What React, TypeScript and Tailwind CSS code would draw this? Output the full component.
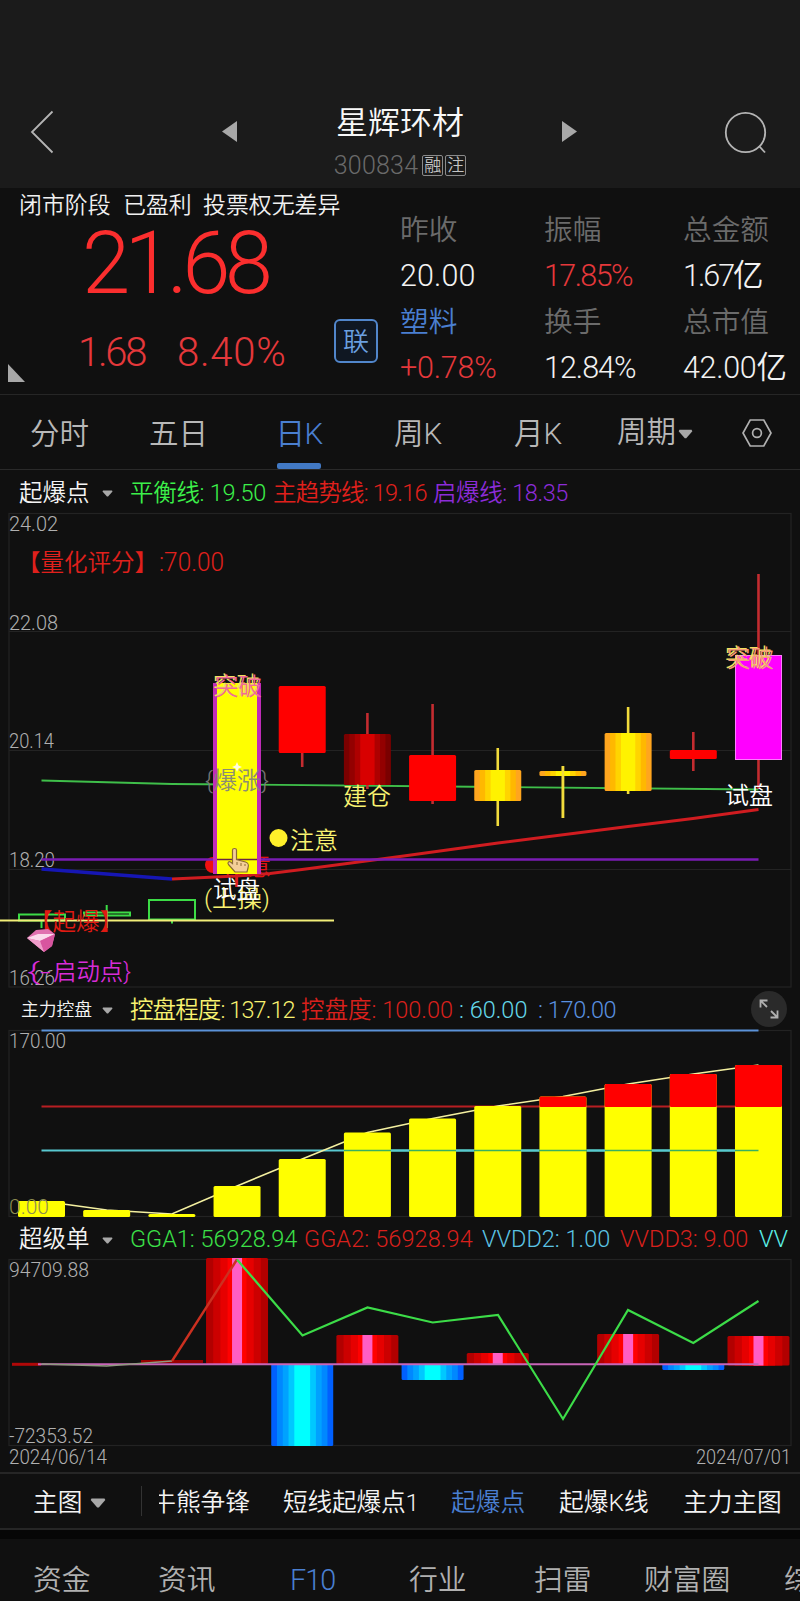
import React from "react";

type LegendItem = {
  text: string;
  className: string;
};

type Candle = {
  top: number;
  bottom: number;
  high: number;
  low: number;
  kind: "red" | "dark" | "gold" | "magenta";
};

type Label = {
  x: number;
  y: number;
  text: string;
  fill: string;
  length: number;
  size?: number;
  opacity?: number;
};

const STEP = 65.18;
const cx = (i: number) => 41.5 + STEP * i;

const stats = [
  { label: "昨收", value: "20.00", labelClass: "text-[#6b6b6b]", valueClass: "text-[#f2f2f2] tracking-[0.1px]" },
  { label: "振幅", value: "17.85%", labelClass: "text-[#6b6b6b]", valueClass: "text-[#e5383b] tracking-[-1.6px]" },
  { label: "总金额", value: "1.67亿", labelClass: "text-[#6b6b6b]", valueClass: "text-[#f2f2f2] tracking-[-2px]" },
  { label: "塑料", value: "+0.78%", labelClass: "text-[#4a7fd0]", valueClass: "text-[#e5383b] tracking-[-0.2px]" },
  { label: "换手", value: "12.84%", labelClass: "text-[#6b6b6b]", valueClass: "text-[#f2f2f2] tracking-[-1px]" },
  { label: "总市值", value: "42.00亿", labelClass: "text-[#6b6b6b]", valueClass: "text-[#f2f2f2] tracking-[-0.3px]" },
];

const candles: (Candle | null)[] = [
  null,
  null,
  null,
  null,
  { top: 686, bottom: 753, high: 686, low: 767, kind: "red" },
  { top: 734, bottom: 785, high: 713, low: 789, kind: "dark" },
  { top: 755, bottom: 801, high: 704, low: 804, kind: "red" },
  { top: 770, bottom: 801, high: 748, low: 826, kind: "gold" },
  { top: 771, bottom: 776, high: 766, low: 818, kind: "gold" },
  { top: 733, bottom: 791, high: 707, low: 794, kind: "gold" },
  { top: 750, bottom: 759, high: 732, low: 771, kind: "red" },
  { top: 655, bottom: 760, high: 574, low: 789, kind: "magenta" },
];

const controlTops = [1201, 1210, 1214, 1186, 1159, 1132.5, 1118.5, 1106, 1096.5, 1084, 1074, 1065];

const flow = [
  { i: 3, top: 1258, bottom: 1364, up: true },
  { i: 4, top: 1364, bottom: 1446, up: false },
  { i: 5, top: 1335, bottom: 1364, up: true },
  { i: 6, top: 1364, bottom: 1380, up: false },
  { i: 7, top: 1353, bottom: 1364, up: true },
  { i: 9, top: 1334, bottom: 1364, up: true },
  { i: 10, top: 1364, bottom: 1370, up: false },
  { i: 11, top: 1336, bottom: 1365.5, up: true },
];

const bands: Record<string, string[]> = {
  red: ["#ff0000"],
  magenta: ["#ff00ff"],
  dark: ["#7a0000", "#930000", "#ad0000", "#d80000"],
  gold: ["#ffa51e", "#ffb800", "#ffd400", "#fff200"],
  up: ["#b20000", "#cc0000", "#e60000", "#ff0000"],
  down: ["#0060ff", "#0088ff", "#00a2ff", "#00c8ff", "#00ffff"],
};

const Bands = ({
  x,
  y,
  w,
  h,
  kind,
}: {
  x: number;
  y: number;
  w: number;
  h: number;
  kind: string;
}) => {
  const colors = bands[kind];
  const inset = w / 2 / (colors.length + 0.1);
  return (
    <g>
      {colors.map((color, i) => (
        <rect
          key={color}
          x={x + inset * i * 0.95}
          y={y}
          width={w - inset * i * 1.9}
          height={h}
          rx={i === 0 ? 1.5 : 0}
          fill={color}
        />
      ))}
    </g>
  );
};

const ChartText = ({ x, y, text, fill, length, size = 23.5, opacity = 1 }: Label) => (
  <text
    x={x}
    y={y}
    fontSize={size}
    fill={fill}
    opacity={opacity}
    textLength={length}
    lengthAdjust="spacingAndGlyphs"
  >
    {text}
  </text>
);

const Frame = ({ top, bottom }: { top: number; bottom: number }) => (
  <rect
    x={9}
    y={top}
    width={782}
    height={bottom - top}
    fill="none"
    stroke="#232323"
    strokeWidth={1.2}
  />
);

const Caret = ({ className }: { className: string }) => (
  <svg viewBox="0 0 16 10" className={`shrink-0 ${className}`}>
    <path d="M1.5 0.5h13l.8 1.6L8.8 9.4H7.2L.7 2.1z" fill="#a8a8a8" />
  </svg>
);

const Legend = ({
  name,
  nameClass,
  items,
  children,
}: {
  name: string;
  nameClass: string;
  items: LegendItem[];
  children?: React.ReactNode;
}) => (
  <div className="flex items-center h-full pl-[19px] pr-[10px] text-[23.5px] whitespace-nowrap overflow-hidden">
    <span className={`w-[83px] pt-1 shrink-0 text-[#f4f4f4] ${nameClass}`}>{name}</span>
    <Caret className="w-[11px] h-[7px] mt-1 mr-[17px]" />
    {items.map((item) => (
      <span key={item.text} className={`pt-1 shrink-0 ${item.className}`}>
        {item.text}
      </span>
    ))}
    {children}
  </div>
);

const Header = () => (
  <header className="h-[188px] pt-[76px] bg-[#1b1b1b] flex">
    <div className="w-[222px] pl-[30px] pt-[34px]">
      <svg viewBox="0 0 24 44" className="w-6 h-11">
        <path d="M22.5 1.5L2 22l20.5 20.5" fill="none" stroke="#b4b4b4" strokeWidth="1.8" />
      </svg>
    </div>
    <div className="w-[99px] pt-[45px]">
      <svg viewBox="0 0 15 21" className="w-[15px] h-[21px]">
        <path d="M15 0v21L0 10.5z" fill="#a8a8a8" />
      </svg>
    </div>
    <div className="w-[158px] flex flex-col items-center">
      <h1 className="text-[32px] leading-[48px] mt-[23px] text-[#f8f8f8]">星辉环材</h1>
      <div className="flex items-center h-7 mt-[4px] text-[#6a6a6a]">
        <span className="text-[25px] leading-7 mr-1 mt-[2px] tracking-[0.2px]">300834</span>
        <span className="w-[21px] h-[21px] mr-[2px] border border-[#8a8a8a] rounded-xs text-[17px] leading-[19px] text-center text-[#c4c4c4]">
          融
        </span>
        <span className="w-[21px] h-[21px] border border-[#8a8a8a] rounded-xs text-[17px] leading-[19px] text-center text-[#c4c4c4]">
          注
        </span>
      </div>
    </div>
    <div className="w-[245px] pl-[83px] pt-[45px]">
      <svg viewBox="0 0 15 21" className="w-[15px] h-[21px]">
        <path d="M0 0l15 10.5L0 21z" fill="#a8a8a8" />
      </svg>
    </div>
    <svg viewBox="0 0 44 44" className="w-11 h-11 mt-[35px]">
      <circle cx="21.5" cy="21.5" r="19.7" fill="none" stroke="#b4b4b4" strokeWidth="1.8" />
      <path d="M35 35l6 6.5" stroke="#b4b4b4" strokeWidth="1.8" />
    </svg>
  </header>
);

const Quote = () => (
  <section className="flex h-[207px] border-b border-[#262626]">
    <div className="w-[400px]">
      <div className="flex pl-[19px] h-8 pt-[2px] text-[22.9px] leading-8 text-[#f0f0f0]">
        <span className="w-[104px]">闭市阶段</span>
        <span className="w-[80px]">已盈利</span>
        <span>投票权无差异</span>
      </div>
      <div className="pl-[82px] pt-[3px] text-[87px] leading-[80px] h-[82px] tracking-[-5.7px] text-[#fb2e2e]">
        21.68
      </div>
      <div className="flex h-[92px] text-[40px] leading-[102px] text-[#e5383b]">
        <svg viewBox="0 0 17 18" className="w-[17px] h-[18px] ml-2 mt-[62px]">
          <path d="M0 0v18h17z" fill="#a8a8a8" />
        </svg>
        <span className="w-[99px] ml-[53px] tracking-[-2.2px]">1.68</span>
        <span className="w-[157px] tracking-[0.8px]">8.40%</span>
        <span className="w-11 h-11 mt-[17px] rounded-md border-2 border-[#5186cb] bg-[#0f1722] text-[26px] leading-[42px] text-center text-[#6ba0e0]">
          联
        </span>
      </div>
    </div>
    <div className="grid grid-cols-[144px_139px_117px] auto-rows-[91.5px] pt-[19px] whitespace-nowrap">
      {stats.map((stat) => (
        <div key={stat.label} className="flex flex-col">
          <span className={`text-[28.7px] leading-[46px] ${stat.labelClass}`}>{stat.label}</span>
          <span className={`text-[30.5px] leading-[45px] ${stat.valueClass}`}>{stat.value}</span>
        </div>
      ))}
    </div>
  </section>
);

const PeriodTabs = () => (
  <nav className="flex h-[75px] pl-[30px] border-b border-[#2a2a2a] text-[29.5px] leading-[78px] text-[#b8b8b8] whitespace-nowrap">
    <span className="w-[119px]">分时</span>
    <span className="w-[128px]">五日</span>
    <span className="flex flex-col w-[44px] mr-[73px] items-center text-[#4a7fd0]">
      <span className="h-[68px] tracking-[-0.5px]">日K</span>
      <span className="w-[44px] h-[6px] rounded-xs bg-[#4279c4]" />
    </span>
    <span className="w-[120px]">周K</span>
    <span className="w-[103px]">月K</span>
    <span className="flex items-center w-[125px]">
      周期
      <Caret className="w-[15px] h-[10px] ml-[2px] mt-1" />
    </span>
    <svg viewBox="0 0 30 28" className="w-[30px] h-7 mt-6">
      <path d="M8.2 1h13.6L29 14l-7.2 13H8.2L1 14z" fill="none" stroke="#b0b0b0" strokeWidth="1.7" />
      <circle cx="15" cy="14" r="4.4" fill="none" stroke="#b0b0b0" strokeWidth="1.7" />
    </svg>
  </nav>
);

const priceLabels: Label[] = [
  { x: 9, y: 531, text: "24.02", fill: "#b0b0b0", length: 49, size: 21 },
  { x: 9, y: 629.5, text: "22.08", fill: "#b0b0b0", length: 49, size: 21 },
  { x: 9, y: 748, text: "20.14", fill: "#b0b0b0", length: 45, size: 21 },
  { x: 9, y: 866.5, text: "18.20", fill: "#b0b0b0", length: 46, size: 21 },
  { x: 9, y: 985, text: "16.26", fill: "#b0b0b0", length: 46, size: 21 },
];

const signals: Label[] = [
  { x: 213, y: 694, text: "突破", fill: "#f0e060", length: 47 },
  { x: 215, y: 695, text: "突破", fill: "#f06a98", length: 47 },
  { x: 725, y: 666, text: "突破", fill: "#f0e060", length: 47 },
  { x: 727, y: 667, text: "突破", fill: "#f59a78", length: 47 },
  { x: 205, y: 789, text: "{爆涨}", fill: "#808080", length: 64, opacity: 0.9 },
  { x: 343, y: 805, text: "建仓", fill: "#f8f270", length: 48 },
  { x: 290, y: 849, text: "注意", fill: "#f8f270", length: 48 },
  { x: 204, y: 907, text: "(上操)", fill: "#f8f270", length: 66 },
  { x: 213, y: 898, text: "试盘", fill: "#ffffff", length: 47 },
  { x: 725, y: 804, text: "试盘", fill: "#ffffff", length: 48 },
];

const PriceChart = () => (
  <svg viewBox="0 513 800 474" className="block w-[800px] h-[474px] overflow-visible">
    <Frame top={513.5} bottom={987} />
    {[631.5, 750.5, 869.5].map((y) => (
      <path key={y} d={`M9 ${y}H791`} stroke="#232323" strokeWidth="1.2" />
    ))}
    {priceLabels.map((l) => (
      <ChartText key={l.text} {...l} />
    ))}
    <text x="17" y="571" fontSize="23.5" fill="#e0201c" textLength="141">
      【量化评分】
    </text>
    <ChartText x={159} y={571} text=":70.00" fill="#e0201c" length={65} size={25} />

    {/* moving lines */}
    <path d="M41.5 780.5L172 784L237 784.5L498 787L758.5 789.5" fill="none" stroke="#3fbf4a" strokeWidth="1.8" />

    {candles.map((c, i) => {
      if (!c) return null;
      const wick = c.kind === "gold" ? "#f2dc3c" : "#c42c30";
      return (
        <g key={i}>
          <path d={`M${cx(i)} ${c.high}V${c.low}`} stroke={wick} strokeWidth="2.6" />
          <Bands x={cx(i) - 23.5} y={c.top} w={47} h={c.bottom - c.top} kind={c.kind} />
        </g>
      );
    })}
    <path d={`M${cx(8)} 766V818`} stroke="#f2dc3c" strokeWidth="2.4" />
    <rect x="735.5" y="655.5" width="46" height="104" fill="none" stroke="#ff7cff" strokeWidth="1" />

    <circle cx="213" cy="865" r="8" fill="#f01010" />
    <ChartText x={224} y={875} text="注意" fill="#e01414" length={47} />
    <path d="M236.7 874V887" stroke="#e02020" strokeWidth="3" />
    <path d="M41.5 869L172 879" stroke="#1616b4" strokeWidth="3.6" />
    <path
      d="M172 879L237 876L270 873.5L302 869.5L400 856.5L498 843L628 826.5L693 818.5L758.5 809.5"
      fill="none"
      stroke="#d01c20"
      strokeWidth="3"
    />
    <path d="M41.5 859.5H758.5" stroke="#7a1cb4" strokeWidth="2.4" />

    <rect x="213" y="683" width="48" height="191" fill="#c02cb8" />
    <rect x="217" y="683" width="40" height="191" fill="#ffff00" />
    <path d="M217 859.5H257" stroke="#6c2840" strokeWidth="1.5" />
    <path d="M237 762l1.5 3.5 3.5 1.5-3.5 1.5-1.5 3.5-1.5-3.5-3.5-1.5 3.5-1.5z" fill="#fffbe0" />

    <g fill="none" stroke="#3cdc46" strokeWidth="2">
      <rect x="19" y="914.5" width="46" height="6" />
      <path d="M41.5 920V928M84 912.5H130V915.5H84zM106.7 905V928" />
      <rect x="149" y="900" width="46" height="19.5" />
      <path d="M172 920V923.5" />
    </g>
    <path d="M0 920.5H334" stroke="#f2ee78" strokeWidth="2.2" />

    <circle cx="278.5" cy="838" r="9" fill="#fff02a" />
    {signals.map((l) => (
      <ChartText key={`${l.x}-${l.text}`} {...l} />
    ))}

    {/* pointing hand */}
    <path
      d="M232.5 850c0-2 4-2 4 0v9.5l9 2.5c3 1 3.5 2.5 2.5 6l-1 4h-12l-6.5-7.5c-1.5-2 .5-3.5 2-2.5l2 1.5z"
      fill="#f4cf98"
      stroke="#8a6a34"
      strokeWidth="1.2"
    />
    <path d="M237 862v3M241 863v3M245 864v2" stroke="#8a6a34" strokeWidth="1" />

    <text x="29" y="930" fontSize="23.5" fill="#e01a12">
      【起爆】
    </text>

    {/* gem */}
    <path d="M27 938L36 930L48 929L55 934L52 946L44 952z" fill="#e070b0" />
    <path d="M27 938L38 934L55 934L40 941z" fill="#fbd8ec" />
    <path d="M40 941L55 934L52 946L44 952z" fill="#d8559f" />
    <path d="M27 938L40 941L44 952z" fill="#f09cca" />

    <ChartText x={27} y={980} text="{-" fill="#d82cd8" length={24} />
    <ChartText x={53} y={980} text="启动点}" fill="#d82cd8" length={78} />
  </svg>
);

const ControlChart = () => (
  <svg viewBox="0 1030 800 187" className="block w-[800px] h-[187px] overflow-visible">
    <Frame top={1030.5} bottom={1216.5} />
    <path d="M41.5 1106.5H758.5" stroke="#b81e22" strokeWidth="2" />
    <path d="M41.5 1150.5H758.5" stroke="#58c8d0" strokeWidth="2" />
    <polyline
      points={controlTops.map((y, i) => `${cx(i)},${y}`).join(" ")}
      fill="none"
      stroke="#f4f0a0"
      strokeWidth="1.6"
    />
    {controlTops.map((y, i) => (
      <g key={y}>
        <rect x={cx(i) - 23.5} y={y} width={47} height={1217 - y} rx={1.5} fill="#ffff00" />
        {y < 1106 && <rect x={cx(i) - 23.5} y={y} width={47} height={1107 - y} rx={1.5} fill="#ff0000" />}
      </g>
    ))}
    <path d="M344 1150.5H758.5" stroke="#38b060" strokeWidth="1.6" />
    <path
      d="M391 1150.5h18M456 1150.5h18M521 1150.5h18M587 1150.5h18M652 1150.5h18M717 1150.5h18"
      stroke="#58c8d0"
      strokeWidth="2"
    />
    <path d="M41.5 1030.5H758.5" stroke="#5b92d8" strokeWidth="2" />
    <ChartText x={9} y={1048} text="170.00" fill="#b0b0b0" length={57} size={21} />
    <ChartText x={9} y={1214} text="0.00" fill="#8c8c50" length={40} size={21} />
  </svg>
);

const FlowChart = () => (
  <svg viewBox="0 1259 800 213" className="block w-[800px] h-[213px] overflow-visible">
    <Frame top={1259.5} bottom={1445.5} />
    <path d="M12 1364.3H41" stroke="#b00808" strokeWidth="3" />
    <path d="M141 1361.5H203" stroke="#900" strokeWidth="3" />
    {flow.map((f) => (
      <g key={f.i}>
        <Bands x={cx(f.i) - 31} y={f.top} w={62} h={f.bottom - f.top} kind={f.up ? "up" : "down"} />
        {f.up && <rect x={cx(f.i) - 5} y={f.top} width={10} height={f.bottom - f.top} fill="#ff5ec4" />}
      </g>
    ))}
    <path d="M38 1364.3H758.5" stroke="#c865b8" strokeWidth="2" />
    <path d="M41.5 1364L106.7 1366L172 1361" fill="none" stroke="#8f9a80" strokeWidth="1.4" />
    <path d="M172 1361L237 1259.5" stroke="#cc3020" strokeWidth="2.4" />
    <path
      d="M237 1259.5L302.5 1335.5L367.5 1307.5L432.7 1322.5L498 1315L563 1419L628 1310L693.3 1343L758.5 1301"
      fill="none"
      stroke="#3cdc48"
      strokeWidth="2.2"
    />
    <ChartText x={9} y={1276.5} text="94709.88" fill="#b0b0b0" length={80} size={21} />
    <ChartText x={9} y={1443} text="-72353.52" fill="#b0b0b0" length={84} size={21} />
    <ChartText x={9} y={1463.5} text="2024/06/14" fill="#b0b0b0" length={98} size={21} />
    <ChartText x={696} y={1463.5} text="2024/07/01" fill="#b0b0b0" length={95} size={21} />
  </svg>
);

const IndicatorTabs = () => (
  <nav className="flex items-center h-[58px] pl-[33px] border-y-2 border-[#262626] text-[24.7px] leading-[54px] text-[#f4f4f4] whitespace-nowrap overflow-hidden">
    <span className="w-[57px] shrink-0 pt-1">主图</span>
    <Caret className="w-4 h-[10px] mt-1 mr-[35px]" />
    <span className="w-px h-[30px] mr-[17px] shrink-0 bg-[#333]" />
    <span className="flex justify-end w-[91px] mr-[33px] shrink-0 pt-1 overflow-hidden">牛熊争锋</span>
    <span className="w-[168px] shrink-0 pt-1 tracking-[-0.2px]">短线起爆点1</span>
    <span className="w-[108px] shrink-0 pt-1 text-[#4a7fd0]">起爆点</span>
    <span className="w-[124px] shrink-0 pt-1">起爆K线</span>
    <span className="shrink-0 pt-1">主力主图</span>
  </nav>
);

const BottomTabs = () => (
  <nav className="flex h-[71px] pl-[33px] border-t-[9px] border-[#060606] text-[28.8px] leading-[82px] text-[#b0b0b0] whitespace-nowrap overflow-hidden">
    <span className="w-[125px] shrink-0">资金</span>
    <span className="w-[132px] shrink-0">资讯</span>
    <span className="w-[119px] shrink-0 tracking-[-1px] text-[#4a7fd0]">F10</span>
    <span className="w-[125px] shrink-0">行业</span>
    <span className="w-[110px] shrink-0">扫雷</span>
    <span className="w-[140px] shrink-0">财富圈</span>
    <span className="shrink-0">综合</span>
  </nav>
);

const App = () => {
  return (
    <div className="w-[800px] h-[1601px] overflow-hidden bg-[#101010] font-[350] font-[Roboto,'Noto_Sans_CJK_SC',sans-serif]">
      <Header />
      <Quote />
      <PeriodTabs />
      <div className="h-[43px]">
        <Legend
          name="起爆点"
          nameClass=""
          items={[
            { text: "平衡线: 19.50", className: "w-[143px] tracking-[-0.3px] text-[#3cf04a]" },
            { text: "主趋势线: 19.16", className: "w-[160px] tracking-[-0.8px] text-[#e0201c]" },
            { text: "启爆线: 18.35", className: "tracking-[-0.4px] text-[#8c2cd8]" },
          ]}
        />
      </div>
      <PriceChart />
      <div className="h-[43px]">
        <Legend
          name="主力控盘"
          nameClass="text-[17.8px] pl-[2px]"
          items={[
            { text: "控盘程度: 137.12", className: "w-[171px] tracking-[-0.9px] text-[#f8f270]" },
            { text: "控盘度: 100.00", className: "w-[158px] text-[#d8201c]" },
            { text: ": 60.00", className: "w-[79px] text-[#64d8ea]" },
            { text: ": 170.00", className: "w-[213px] tracking-[-0.4px] text-[#5a90e0]" },
          ]}
        >
          <span className="flex items-center justify-center w-9 h-9 shrink-0 rounded-full bg-[#2a2a2a]">
            <svg viewBox="0 0 20 20" className="w-5 h-5" fill="none" stroke="#b0b0b0" strokeWidth="1.8">
              <path d="M1.5 8.5V1.5H8.5M1.5 1.5L8 8M18.5 11.5V18.5H11.5M18.5 18.5L12 12" />
            </svg>
          </span>
        </Legend>
      </div>
      <ControlChart />
      <div className="h-[42px]">
        <Legend
          name="超级单"
          nameClass=""
          items={[
            { text: "GGA1: 56928.94", className: "w-[174px] text-[#3ce048]" },
            { text: "GGA2: 56928.94", className: "w-[178px] tracking-[0.1px] text-[#d8201c]" },
            { text: "VVDD2: 1.00", className: "w-[138px] text-[#5cc4e4]" },
            { text: "VVDD3: 9.00", className: "w-[139px] text-[#d8201c]" },
            { text: "VV", className: "text-[#5cf0e8]" },
          ]}
        />
      </div>
      <FlowChart />
      <IndicatorTabs />
      <BottomTabs />
    </div>
  );
};

export default App;
